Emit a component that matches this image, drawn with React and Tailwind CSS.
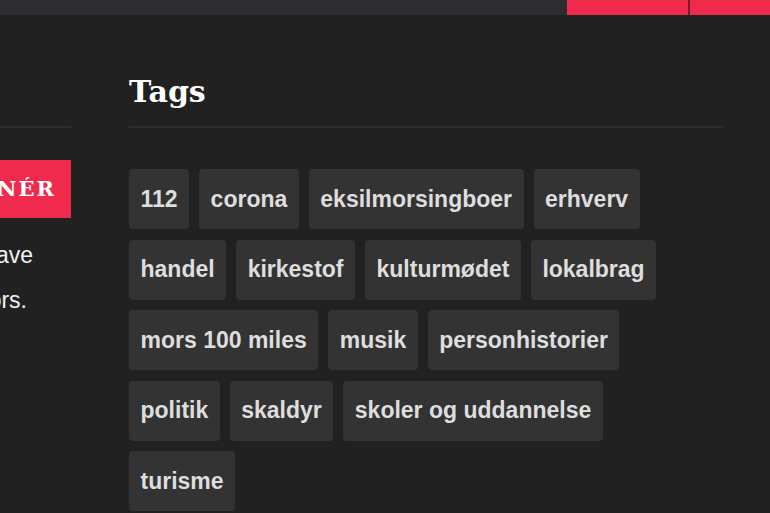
export default function App() {
  const tags = [
    "112",
    "corona",
    "eksilmorsingboer",
    "erhverv",
    "handel",
    "kirkestof",
    "kulturmødet",
    "lokalbrag",
    "mors 100 miles",
    "musik",
    "personhistorier",
    "politik",
    "skaldyr",
    "skoler og uddannelse",
    "turisme",
  ];
  const serif = { fontFamily: '"DejaVu Serif", serif' };
  return (
    <div
      className="w-[770px] h-[513px] overflow-hidden bg-[#212121] text-white"
      style={{ fontFamily: '"Liberation Sans", Arial, sans-serif' }}
    >
      <div className="flex h-[15px] bg-[#2b2d31]">
        <div className="flex-1" />
        <div className="w-[121px] bg-[#ef2a4c]" />
        <div className="w-[2px] bg-[#7a1a2a]" />
        <div className="w-[80px] bg-[#ef2a4c]" />
      </div>
      <div className="flex pt-[57px]">
        <div className="w-[71px] shrink-0 overflow-hidden">
          <div className="h-[54px] border-b-2 border-[#2e2e2e] box-content" />
          <div
            className="mt-[32px] h-[58px] bg-[#ef2a4c] flex items-center justify-end pr-[15px] text-[21px] font-bold tracking-[2px] text-white"
            style={serif}
          >
            <span className="whitespace-nowrap">ABONNÉR</span>
          </div>
          <div className="mt-[15px] text-[23px] leading-[45px] text-[#f2f2f2]">
            <div className="flex justify-end w-[33px]">
              <span className="whitespace-nowrap">
                Støt lokal journalistik, eller giv et abonnement i gave
              </span>
            </div>
            <div className="flex justify-end w-[27px]">
              <span className="whitespace-nowrap">til en god ven her på Mors.</span>
            </div>
          </div>
        </div>
        <div className="ml-[58px] w-[594px]">
          <h2
            className="text-[30px] leading-[34px] font-bold pt-[3px] pb-[17px] border-b-2 border-[#2e2e2e]"
            style={serif}
          >
            Tags
          </h2>
          <div className="mt-[41px] w-[565px] flex flex-wrap gap-x-[10px] gap-y-[10.5px]">
            {tags.map((t) => (
              <span
                key={t}
                className="h-[60px] px-[11.5px] flex items-center rounded-[4px] bg-[#333333] text-[#dedede] text-[23px] font-bold whitespace-nowrap"
              >
                {t}
              </span>
            ))}
          </div>
        </div>
      </div>
    </div>
  );
}
